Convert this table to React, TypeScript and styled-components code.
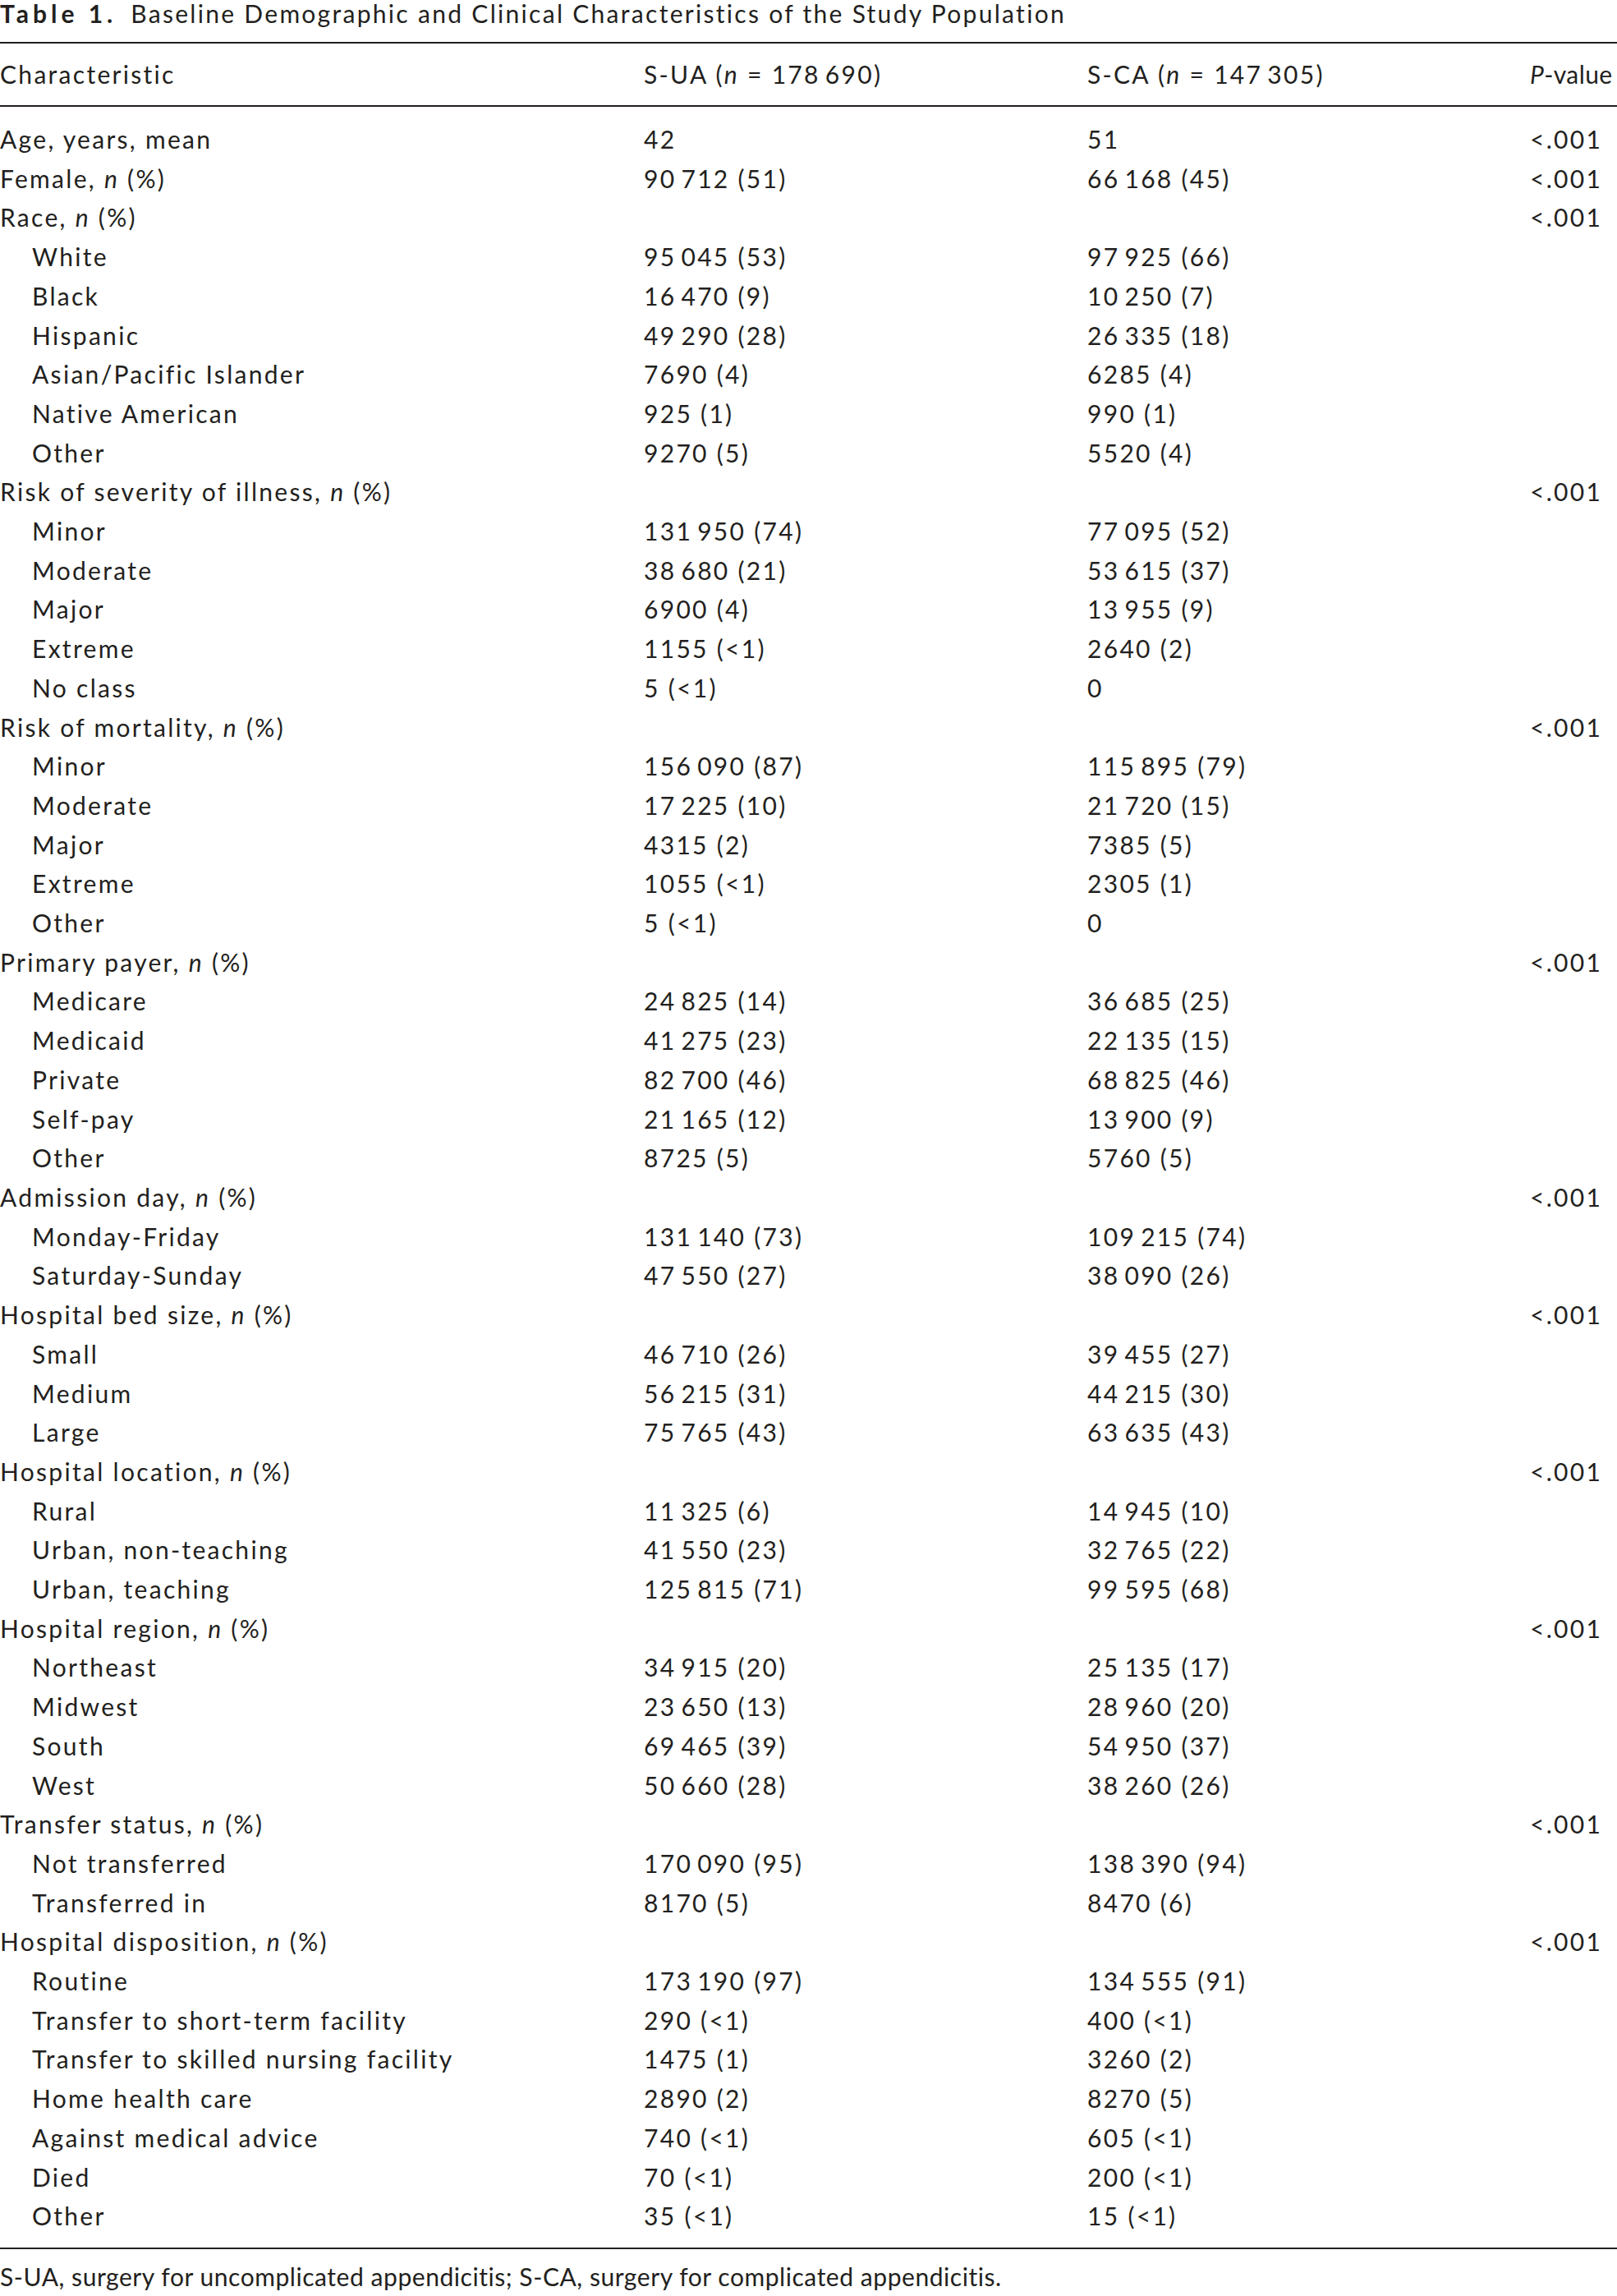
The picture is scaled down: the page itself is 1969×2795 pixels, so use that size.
import { FC } from 'react';
import styled, { createGlobalStyle } from 'styled-components';

const INK = '#231f20';

const GlobalStyle = createGlobalStyle`
  html, body {
    margin: 0;
    padding: 0;
    background: #ffffff;
  }
  body {
    font-family: Lato, "Open Sans", sans-serif;
    color: ${INK};
  }
`;

interface IItem {
  label: string;
  ua: string;
  ca: string;
}

interface IGroup {
  label: string;
  ua?: string;
  ca?: string;
  p?: string;
  percent?: boolean;
  items?: IItem[];
}

const item = (label: string, ua: string, ca: string): IItem => ({ label, ua, ca });

const groups: IGroup[] = [
  { label: 'Age, years, mean', ua: '42', ca: '51', p: '<.001' },
  { label: 'Female,', ua: '90 712 (51)', ca: '66 168 (45)', p: '<.001', percent: true },
  {
    label: 'Race,',
    p: '<.001',
    percent: true,
    items: [
      item('White', '95 045 (53)', '97 925 (66)'),
      item('Black', '16 470 (9)', '10 250 (7)'),
      item('Hispanic', '49 290 (28)', '26 335 (18)'),
      item('Asian/Pacific Islander', '7690 (4)', '6285 (4)'),
      item('Native American', '925 (1)', '990 (1)'),
      item('Other', '9270 (5)', '5520 (4)')
    ]
  },
  {
    label: 'Risk of severity of illness,',
    p: '<.001',
    percent: true,
    items: [
      item('Minor', '131 950 (74)', '77 095 (52)'),
      item('Moderate', '38 680 (21)', '53 615 (37)'),
      item('Major', '6900 (4)', '13 955 (9)'),
      item('Extreme', '1155 (<1)', '2640 (2)'),
      item('No class', '5 (<1)', '0')
    ]
  },
  {
    label: 'Risk of mortality,',
    p: '<.001',
    percent: true,
    items: [
      item('Minor', '156 090 (87)', '115 895 (79)'),
      item('Moderate', '17 225 (10)', '21 720 (15)'),
      item('Major', '4315 (2)', '7385 (5)'),
      item('Extreme', '1055 (<1)', '2305 (1)'),
      item('Other', '5 (<1)', '0')
    ]
  },
  {
    label: 'Primary payer,',
    p: '<.001',
    percent: true,
    items: [
      item('Medicare', '24 825 (14)', '36 685 (25)'),
      item('Medicaid', '41 275 (23)', '22 135 (15)'),
      item('Private', '82 700 (46)', '68 825 (46)'),
      item('Self-pay', '21 165 (12)', '13 900 (9)'),
      item('Other', '8725 (5)', '5760 (5)')
    ]
  },
  {
    label: 'Admission day,',
    p: '<.001',
    percent: true,
    items: [
      item('Monday-Friday', '131 140 (73)', '109 215 (74)'),
      item('Saturday-Sunday', '47 550 (27)', '38 090 (26)')
    ]
  },
  {
    label: 'Hospital bed size,',
    p: '<.001',
    percent: true,
    items: [
      item('Small', '46 710 (26)', '39 455 (27)'),
      item('Medium', '56 215 (31)', '44 215 (30)'),
      item('Large', '75 765 (43)', '63 635 (43)')
    ]
  },
  {
    label: 'Hospital location,',
    p: '<.001',
    percent: true,
    items: [
      item('Rural', '11 325 (6)', '14 945 (10)'),
      item('Urban, non-teaching', '41 550 (23)', '32 765 (22)'),
      item('Urban, teaching', '125 815 (71)', '99 595 (68)')
    ]
  },
  {
    label: 'Hospital region,',
    p: '<.001',
    percent: true,
    items: [
      item('Northeast', '34 915 (20)', '25 135 (17)'),
      item('Midwest', '23 650 (13)', '28 960 (20)'),
      item('South', '69 465 (39)', '54 950 (37)'),
      item('West', '50 660 (28)', '38 260 (26)')
    ]
  },
  {
    label: 'Transfer status,',
    p: '<.001',
    percent: true,
    items: [
      item('Not transferred', '170 090 (95)', '138 390 (94)'),
      item('Transferred in', '8170 (5)', '8470 (6)')
    ]
  },
  {
    label: 'Hospital disposition,',
    p: '<.001',
    percent: true,
    items: [
      item('Routine', '173 190 (97)', '134 555 (91)'),
      item('Transfer to short-term facility', '290 (<1)', '400 (<1)'),
      item('Transfer to skilled nursing facility', '1475 (1)', '3260 (2)'),
      item('Home health care', '2890 (2)', '8270 (5)'),
      item('Against medical advice', '740 (<1)', '605 (<1)'),
      item('Died', '70 (<1)', '200 (<1)'),
      item('Other', '35 (<1)', '15 (<1)')
    ]
  }
];

// digit groups are split by a thin space, as in the printed table
const num = (s?: string) => (s ? s.replace(/(\d) (\d)/g, '$1\u2009$2') : '');

const Page = styled.div`
  width: 1969px;
  font-size: 30px;
  letter-spacing: 2.3px;
`;

const Caption = styled.div`
  line-height: 32px;
  margin-bottom: 19px;
  white-space: nowrap;
`;

const CaptionLabel = styled.span`
  font-weight: 700;
  letter-spacing: 5px;
  margin-right: 7px;
`;

const Table = styled.table`
  width: 1969px;
  table-layout: fixed;
  border-collapse: collapse;
  border-top: 2px solid ${INK};
  border-bottom: 2px solid ${INK};

  thead tr {
    border-bottom: 2px solid ${INK};
  }
  tbody tr:first-child td {
    padding-top: 16px;
  }
  tbody tr:last-child td {
    padding-bottom: 14px;
  }
`;

const Col = styled.col<{ $width?: number }>`
  width: ${(p) => (p.$width ? `${p.$width}px` : 'auto')};
`;

const HeadCell = styled.th<{ $tight?: boolean }>`
  padding: 0;
  height: 75px;
  line-height: 75px;
  font-weight: 400;
  text-align: left;
  white-space: nowrap;
  vertical-align: middle;
  letter-spacing: ${(p) => (p.$tight ? '0.4px' : 'inherit')};
`;

const Cell = styled.td<{ $indent?: boolean }>`
  padding: 0 0 0 ${(p) => (p.$indent ? '39px' : '0')};
  line-height: 47.7px;
  white-space: nowrap;
  vertical-align: top;
`;

const Footnote = styled.p`
  margin: 13px 0 0;
  line-height: 40px;
  letter-spacing: 0.55px;
  white-space: nowrap;
`;

const Label: FC<{ group: IGroup }> = ({ group }) => (
  <>
    {group.label}
    {group.percent && (
      <>
        {' '}
        <i>n</i> (%)
      </>
    )}
  </>
);

const GroupRows: FC<{ group: IGroup }> = ({ group }) => (
  <>
    <tr>
      <Cell>
        <Label group={group} />
      </Cell>
      <Cell>{num(group.ua)}</Cell>
      <Cell>{num(group.ca)}</Cell>
      <Cell>{group.p}</Cell>
    </tr>
    {group.items?.map((row, i) => (
      <tr key={`${row.label}-${i}`}>
        <Cell $indent>{row.label}</Cell>
        <Cell>{num(row.ua)}</Cell>
        <Cell>{num(row.ca)}</Cell>
        <Cell />
      </tr>
    ))}
  </>
);

const App: FC = () => {
  return (
    <Page>
      <GlobalStyle />
      <Caption>
        <CaptionLabel>Table 1.</CaptionLabel> Baseline Demographic and Clinical Characteristics of
        the Study Population
      </Caption>

      <Table>
        <colgroup>
          <Col $width={784} />
          <Col $width={540} />
          <Col $width={539} />
          <Col />
        </colgroup>
        <thead>
          <tr>
            <HeadCell>Characteristic</HeadCell>
            <HeadCell>
              S-UA (<i>n</i> = {num('178 690')})
            </HeadCell>
            <HeadCell>
              S-CA (<i>n</i> = {num('147 305')})
            </HeadCell>
            <HeadCell $tight>
              <i>P</i>-value
            </HeadCell>
          </tr>
        </thead>
        <tbody>
          {groups.map((group) => (
            <GroupRows key={group.label} group={group} />
          ))}
        </tbody>
      </Table>

      <Footnote>
        S-UA, surgery for uncomplicated appendicitis; S-CA, surgery for complicated appendicitis.
      </Footnote>
    </Page>
  );
};

export default App;
